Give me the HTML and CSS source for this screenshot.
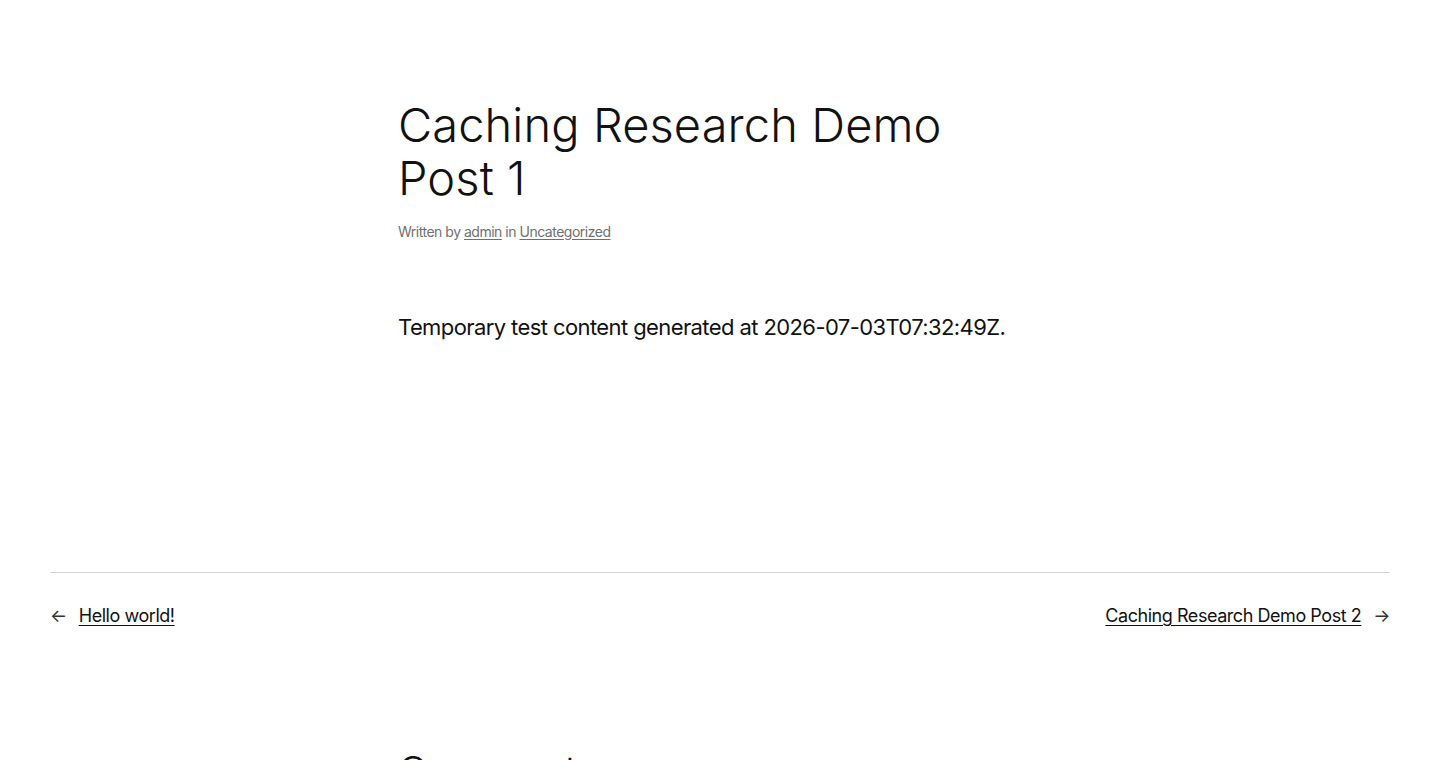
FILE: index.html
```html
<!DOCTYPE html>
<html lang="en">
<head>
    <meta charset="UTF-8">
    <title>Caching Research Demo Post 1</title>
    <link rel="stylesheet" href="styles.css">
</head>
<body>
    <main class="site-main">
        <article class="post">
            <header class="post-header">
                <h1 class="post-title">Caching Research Demo Post 1</h1>
                <div class="post-meta">
                    Written by <a href="#">admin</a> in <a href="#">Uncategorized</a>
                </div>
            </header>

            <div class="post-content">
                <p>Temporary test content generated at 2026-07-03T07:32:49Z.</p>
            </div>
        </article>

        <nav class="post-nav">
            <div class="nav-prev">
                <span class="nav-arrow">&larr;</span>
                <a href="#">Hello world!</a>
            </div>
            <div class="nav-next">
                <a href="#">Caching Research Demo Post 2</a>
                <span class="nav-arrow">&rarr;</span>
            </div>
        </nav>

        <section class="comments">
            <h2 class="comments-title">Comments</h2>
        </section>
    </main>
</body>
</html>
```

FILE: styles.css
```css
body { margin: 0; background: #fff; color: #111; font-family: Inter, "Noto Sans", sans-serif; }
a { color: inherit; }

.site-main { padding: 0 50px; }

.post { width: 644px; margin: 0 auto; padding-top: 98px; }
.post-title { margin: 0; font-size: 47px; font-weight: 300; line-height: 53px; letter-spacing: 0.002em; }
.post-meta { margin-top: 18px; font-size: 14px; line-height: 20px; color: #707070; letter-spacing: -0.035em; }
.post-meta a { text-underline-offset: 2px; }

.post-content { margin-top: 70px; height: 260px; }
.post-content p { margin: 0; font-size: 22px; line-height: 30px; letter-spacing: -0.027em; }

.post-nav { display: flex; justify-content: space-between; align-items: center; border-top: 1px solid #d4d4d4; padding-top: 31px; font-size: 18px; line-height: 24px; letter-spacing: -0.025em; }
.post-nav a { text-underline-offset: 3px; }
.nav-prev, .nav-next { display: flex; align-items: center; gap: 12px; }
.nav-arrow { color: #333; }

.comments { width: 644px; margin: 0 auto; padding-top: 119px; }
.comments-title { margin: 0; font-size: 40px; font-weight: 300; line-height: 48px; letter-spacing: -0.01em; }
```
